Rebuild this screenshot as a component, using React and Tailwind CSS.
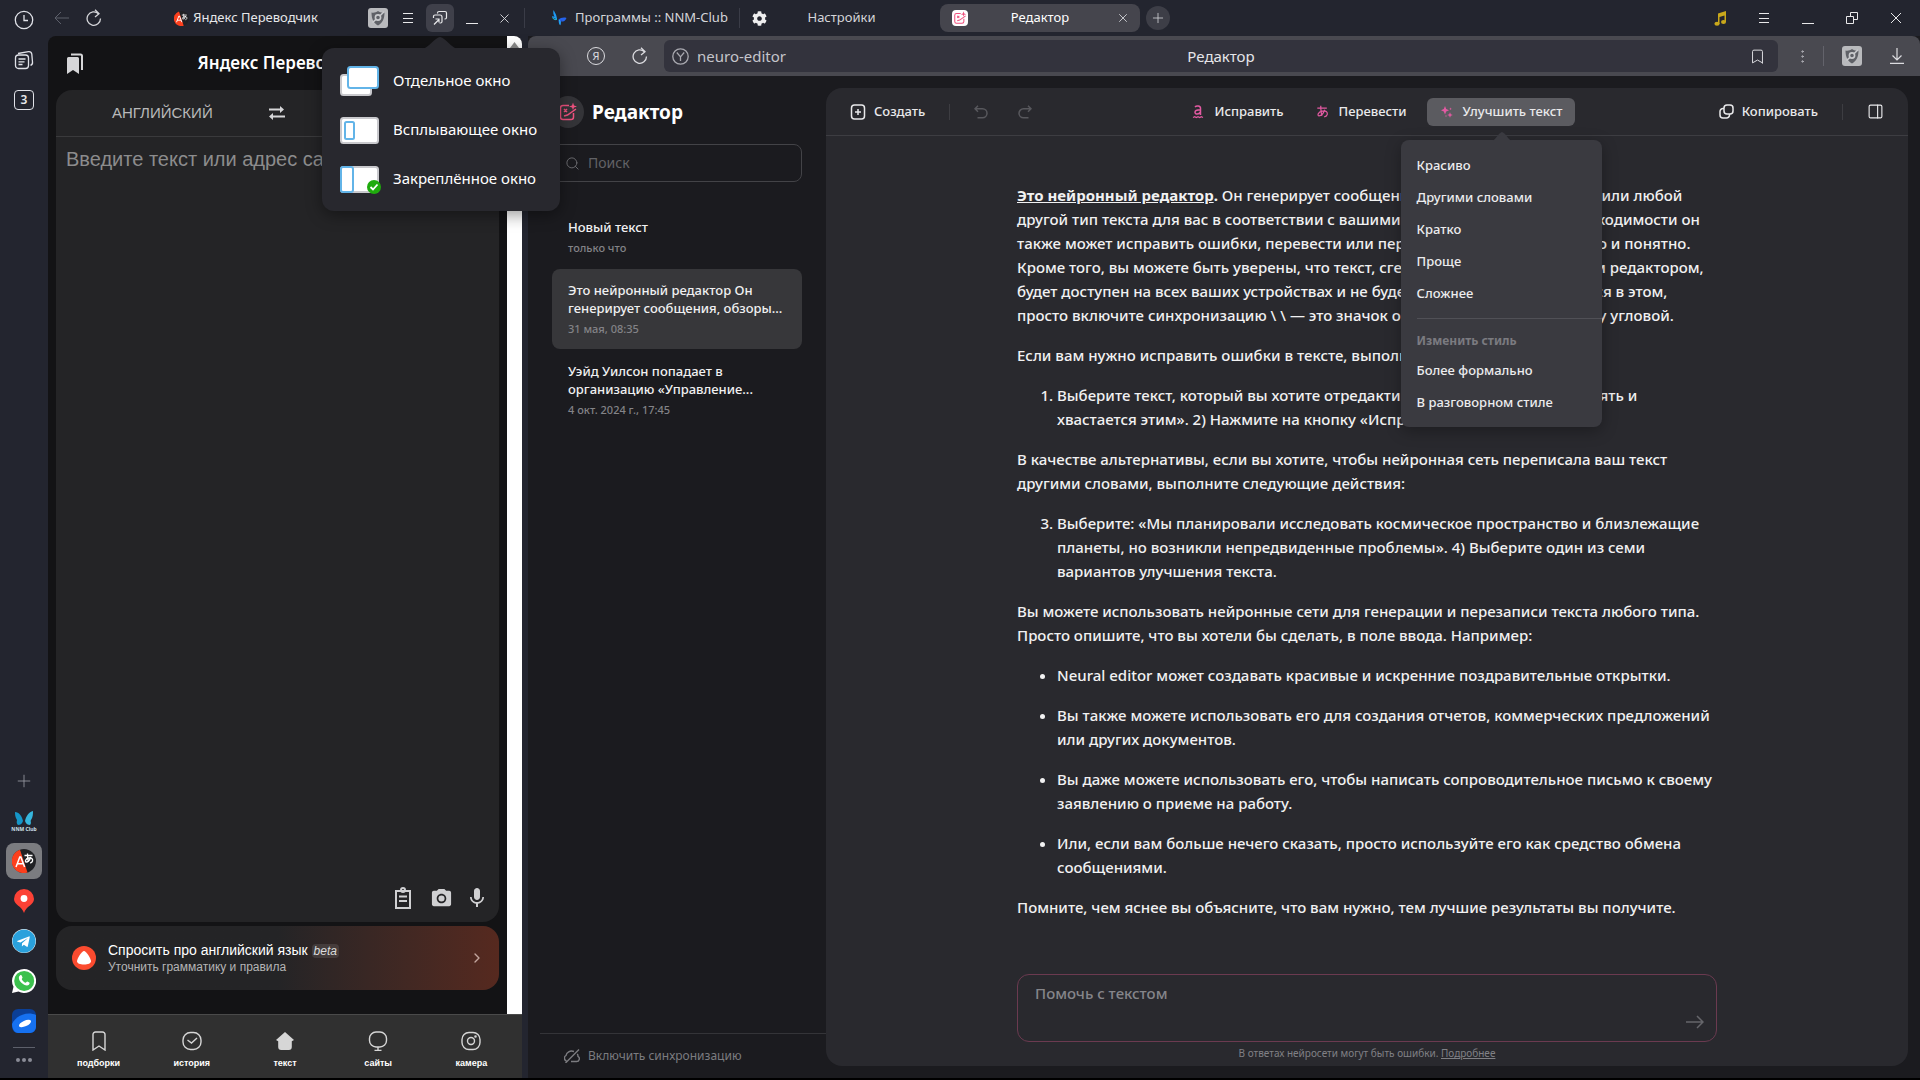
import {
  Bookmark,
  ChevronRight,
  MoreVertical,
  PanelRight,
  Plus,
  Search,
  X,
} from 'lucide-react'
import { FaTelegram, FaCog } from 'react-icons/fa'
import { MdCameraAlt, MdMic } from 'react-icons/md'

const EDITOR_ITEMS = [
  { title: ['Новый текст'], date: 'только что' },
  { title: ['Это нейронный редактор Он', 'генерирует сообщения, обзоры...'], date: '31 мая, 08:35', active: true },
  { title: ['Уэйд Уилсон попадает в', 'организацию «Управление...'], date: '4 окт. 2024 г., 17:45' },
]

const IMPROVE_ITEMS = ['Красиво', 'Другими словами', 'Кратко', 'Проще', 'Сложнее']
const STYLE_ITEMS = ['Более формально', 'В разговорном стиле']

function Lines({ of }) {
  return of.map((line, i) => (
    <span key={i} className="block whitespace-nowrap">{line}</span>
  ))
}

function ShieldIcon() {
  return (
    <svg width="20" height="20" viewBox="0 0 20 20" aria-hidden="true">
      <rect width="20" height="20" rx="3" fill="#b9babd" />
      <path d="M3.500 4.500C6 5 8 4.400 10 3c2 1.400 4 2 6.500 1.500C16.500 11 14.500 15 10 17.500 5.500 15 3.500 11 3.500 4.500Z" fill="#5f6167" />
      <circle cx="10" cy="9.500" r="2.600" fill="none" stroke="#c9cacd" strokeWidth="1.600" />
      <path d="M4.500 14.500 8 11.300M12 7.700l4-4" stroke="#c9cacd" strokeWidth="1.600" />
    </svg>
  )
}

function ReloadIcon() {
  return (
    <svg width="16" height="18" viewBox="0 0 16 18" fill="none" stroke="currentColor" strokeWidth="1.300" aria-hidden="true">
      <path d="M12.500 4.800A6.700 6.700 0 1 0 14.500 9.500" />
      <path d="M9 .8l4 4-4 3.200" />
    </svg>
  )
}

function MenuIcon() {
  return (
    <svg width="12" height="12" viewBox="0 0 12 12" stroke="#e8e8ea" aria-hidden="true">
      <path d="M1 1.500h10M1 6.500h10M1 10.500h10" />
    </svg>
  )
}

function PinIcon() {
  return (
    <svg width="16" height="16" viewBox="0 0 16 16" fill="none" stroke="#e8e8ea" strokeWidth="1.200" aria-hidden="true">
      <path d="M5.500 3.500V3a1.500 1.500 0 0 1 1.500-1.500h6A1.500 1.500 0 0 1 14.500 3v4.500A1.500 1.500 0 0 1 13 9h-.5" />
      <path d="M1.500 8V6.500A1.500 1.500 0 0 1 3 5h5a2 2 0 0 1 2 2v4.500A1.500 1.500 0 0 1 8.500 13H7.500" />
      <path d="M2 14.500 7 9.500M3.500 9H7v3.500" />
    </svg>
  )
}

function TranslateLogo({ size }) {
  return (
    <svg width={size} height={size} viewBox="0 0 24 24" aria-hidden="true">
      <circle cx="12" cy="12" r="12" fill="#202124" />
      <path d="M8 .7A12 12 0 1 0 15.500 23.500Z" fill="#fc3f1d" />
      <path d="m4 18 3.800-10h1l3.800 10M5.300 14.700h6" fill="none" stroke="#fff" strokeWidth="1.500" />
      <path d="M12.500 6.500h8M15.500 4.500c0 4 .3 6.500 1 8.500M18.700 8c-.8 3-3 5-4.500 5s-1-3.500 2.800-4c3-.3 4 1.200 3.500 3-.3 1.200-1.200 1.700-2.300 2" fill="none" stroke="#fff" strokeWidth="1.300" />
    </svg>
  )
}

function EditorLogo({ size }) {
  return (
    <svg width={size} height={size} viewBox="0 0 20 20" fill="none" stroke="#f0527f" strokeWidth="1.500" aria-hidden="true">
      <path d="M11 3.500H5A2.500 2.500 0 0 0 2.500 6v9A2.500 2.500 0 0 0 5 17.500h8a2.500 2.500 0 0 0 2.500-2.500v-4" />
      <path d="m6 14 3.500-1L18 7M6 7l3 3M9 7l-3 3" />
      <path d="M15 .5 16 3.500l3 1-3 1-1 2.500-1-2.500-3-1 3-1Z" fill="#f0527f" stroke="none" />
    </svg>
  )
}

function ButterflyIcon() {
  return (
    <svg width="16" height="16" viewBox="0 0 16 16" aria-hidden="true">
      <path d="M2.500 0c1 2 3 4 3.500 9-2 0-5-1.500-5-3l2.500.7C2.300 4.500 2 2.500 2.500 0Z" fill="#1d9bf5" />
      <path d="M7.500 9.500c2-1.500 5-2.500 8-1.500-1 3-3 3.500-5 3.500l.8-1.500c-1 .8-1.800 2.500-1.800 5.500-2-2-2-4-2-6Z" fill="#2563eb" />
      <path d="M1.500 7.500c1 2 3 2.800 4.500 1.500M8 10c1 .5 1 2.500 1 4.500" stroke="#22d3ee" fill="none" />
    </svg>
  )
}

function WindowIcon({ kind }) {
  return (
    <svg width="41" height="30" viewBox="0 0 41 30" aria-hidden="true">
      {kind === 'separate' && (
        <>
          <rect x="1" y="9" width="30" height="20" rx="2.500" fill="#fff" stroke="#c9c9cd" strokeWidth="2" />
          <rect x="8" y="1" width="30" height="21" rx="2.500" fill="#fff" stroke="#62b4e8" strokeWidth="2" />
        </>
      )}
      {kind === 'popup' && (
        <>
          <rect x="1" y="3" width="37" height="25" rx="2.500" fill="#fff" stroke="#c9c9cd" strokeWidth="2" />
          <rect x="5" y="7" width="9" height="17" rx="1.500" fill="#fff" stroke="#62b4e8" strokeWidth="2" />
        </>
      )}
      {kind === 'pinned' && (
        <>
          <rect x="1" y="3" width="37" height="25" rx="2.500" fill="#fff" stroke="#c9c9cd" strokeWidth="2" />
          <rect x="1" y="3" width="12" height="25" rx="2" fill="#fff" stroke="#62b4e8" strokeWidth="2" />
          <circle cx="34" cy="23" r="7" fill="#1fab0d" />
          <path d="m30.500 23 2.500 2.500 4.500-5" fill="none" stroke="#fff" strokeWidth="1.800" />
        </>
      )}
    </svg>
  )
}

function WindowModeMenu() {
  const modes = [
    ['separate', 'Отдельное окно'],
    ['popup', 'Всплывающее окно'],
    ['pinned', 'Закреплённое окно'],
  ]
  return (
    <div className="absolute top-11 -left-26 z-30 flex w-[238px] flex-col rounded-xl bg-[#28282e] py-2 shadow-[0_4px_16px_rgba(0,0,0,0.4)]">
      <svg className="absolute -top-3 left-24" width="44" height="13" viewBox="0 0 44 13" aria-hidden="true">
        <path d="M4 13c7-1 12-11 18-12 6 1 11 11 18 12Z" fill="#28282e" />
      </svg>
      {modes.map(([kind, label]) => (
        <button key={kind} className="flex h-[49px] items-center gap-3 pl-[18px] text-left text-[15px] text-white">
          <WindowIcon kind={kind} />
          <span className="whitespace-nowrap">{label}</span>
        </button>
      ))}
    </div>
  )
}

function TitleBar() {
  return (
    <header className="flex h-9 shrink-0 items-center text-[13px] text-[#d5d6da]">
      <div className="flex h-full w-[525px] shrink-0 items-center pl-[52px]">
        <button aria-label="Назад" className="flex w-5 justify-center text-[#5d606b]">
          <svg width="16" height="16" viewBox="0 0 16 16" fill="none" stroke="currentColor" aria-hidden="true">
            <path d="M15 8H1.500M7 2 1 8l6 6" />
          </svg>
        </button>
        <button aria-label="Обновить" className="ml-3 flex w-5 justify-center"><ReloadIcon /></button>
        <div className="flex flex-1 items-center justify-center gap-1 pl-5">
          <TranslateLogo size={15} />
          <span className="whitespace-nowrap text-[#e6e7ea]">Яндекс Переводчик</span>
        </div>
        <div className="flex items-center">
          <button aria-label="Защита"><ShieldIcon /></button>
          <button aria-label="Меню" className="ml-3.5"><MenuIcon /></button>
          <div className="relative ml-3">
            <button aria-label="Режим окна" className="flex h-7 w-7 items-center justify-center rounded-md bg-[#3f404a]">
              <PinIcon />
            </button>
            <WindowModeMenu />
          </div>
          <button aria-label="Свернуть" className="ml-3 flex h-3 w-3 items-end"><span className="h-px w-full bg-[#e8e8ea]" /></button>
          <button aria-label="Закрыть" className="mr-3 ml-[19px]"><X size={15} strokeWidth={1.5} /></button>
          <span className="h-5 w-px bg-[#3a3c47]" />
        </div>
      </div>

      <nav className="flex h-full flex-1 items-center">
        <button className="flex h-5 w-[215px] items-center gap-2 border-r border-[#3a3c47] pl-6.5 whitespace-nowrap">
          <ButterflyIcon />
          Программы :: NNM-Club
        </button>
        <button className="flex h-6 w-[200px] items-center pl-3 whitespace-nowrap">
          <FaCog size={15} className="text-[#eeeeef]" />
          <span className="flex-1 pr-6 text-center">Настройки</span>
        </button>
        <div className="flex h-7 w-[200px] items-center rounded-lg bg-[#45454d] pr-2.5 pl-3">
          <span className="rounded bg-white p-px"><EditorLogo size={14} /></span>
          <button className="flex-1 pr-1 text-center text-white">Редактор</button>
          <button aria-label="Закрыть вкладку"><X size={14} strokeWidth={1.5} /></button>
        </div>
        <button aria-label="Новая вкладка" className="ml-1.5 flex h-6 w-6 items-center justify-center rounded-full bg-[#3d3e47]">
          <Plus size={16} strokeWidth={1.2} />
        </button>
      </nav>

      <div className="flex w-[210px] items-center gap-8 pl-1">
        <svg width="12" height="15" viewBox="0 0 12 15" fill="#c9a81b" aria-hidden="true">
          <path d="M4 2.500 12 0v11h-1.500V4.500l-5 1.500v7H4Z" />
          <ellipse cx="3" cy="12.700" rx="2.600" ry="2" />
          <ellipse cx="9.500" cy="11" rx="2.500" ry="2" />
        </svg>
        <button aria-label="Меню браузера"><MenuIcon /></button>
        <button aria-label="Свернуть окно" className="flex h-3 w-3 items-end"><span className="h-px w-full bg-[#e8e8ea]" /></button>
        <button aria-label="Развернуть окно">
          <svg width="12" height="12" viewBox="0 0 12 12" fill="none" stroke="#e8e8ea" aria-hidden="true">
            <path d="M.5 4.500h7v7h-7ZM4.500 4.500v-4h7v7h-4" />
          </svg>
        </button>
        <button aria-label="Закрыть окно">
          <svg width="12" height="12" viewBox="0 0 12 12" stroke="#e8e8ea" aria-hidden="true">
            <path d="m1 1 10 10M11 1 1 11" />
          </svg>
        </button>
      </div>
    </header>
  )
}

function SideRail() {
  return (
    <aside className="flex w-12 shrink-0 flex-col items-center">
      <button aria-label="История" className="-mt-6.5 h-5">
        <svg width="20" height="20" viewBox="0 0 20 20" fill="none" stroke="#e0e2e8" strokeWidth="1.300" aria-hidden="true">
          <circle cx="10" cy="10" r="8.700" />
          <path d="M10 5v5.500h4" />
        </svg>
      </button>
      <button aria-label="Коллекции" className="mt-5 h-5">
        <svg width="20" height="20" viewBox="0 0 20 20" fill="none" stroke="#e0e2e8" strokeWidth="1.300" aria-hidden="true">
          <rect x="1.500" y="5" width="13" height="13.500" rx="3" />
          <path d="M4 3.500 14.500 1.700a3 3 0 0 1 3.300 2.500L18.500 12a3 3 0 0 1-2 3.300M4.500 9h7M4.500 11.800h6M4.500 14.500h4" />
        </svg>
      </button>
      <button className="mt-5 h-5 w-5 rounded border border-[#e0e2e8] text-xs leading-[18px] font-semibold text-[#e6e7ea]">3</button>

      <div className="mt-auto flex flex-col items-center">
        <button aria-label="Добавить" className="text-[#9a9ca5]"><Plus size={20} strokeWidth={1} /></button>
        <button className="mt-5 flex h-6 flex-col items-center" aria-label="NNM-Club">
          <svg width="20" height="15" viewBox="0 0 20 15" aria-hidden="true">
            <path d="M1 1c4 0 7 4 8 9-1 3-3 4-5 4-2-2-1-4-1-5C1 6 1 3 1 1Z" fill="#1596c8" />
            <path d="M19 0c-4 1-7 5-8 10 1 3 3 4 5 4 2-2 0-4 1-5 2-3 2-6 2-9Z" fill="#36b6dd" />
          </svg>
          <span className="text-[5px] leading-[6px] font-bold text-[#cfe0ea]">NNM Club</span>
        </button>
        <button aria-label="Переводчик" className="mt-2 flex h-9 w-9 items-center justify-center rounded-lg bg-[#7b7c80]">
          <TranslateLogo size={24} />
        </button>
        <button aria-label="Карты" className="mt-2.5">
          <svg width="20" height="24" viewBox="0 0 20 24" aria-hidden="true">
            <path d="M10 0a10 10 0 0 1 10 10c0 6-8 7-10 14C8 17 0 16 0 10A10 10 0 0 1 10 0Z" fill="#fc4236" />
            <circle cx="10" cy="9.500" r="3.400" fill="#fff" />
          </svg>
        </button>
        <button aria-label="Telegram" className="mt-4 rounded-full bg-white text-[#2aa1dc]"><FaTelegram size={24} /></button>
        <button aria-label="WhatsApp" className="mt-4">
          <svg width="24" height="24" viewBox="0 0 24 24" aria-hidden="true">
            <path d="M12 0a12 12 0 1 1-5.500 22.600L0 24l1.500-6.200A12 12 0 0 1 12 0Z" fill="#fff" />
            <circle cx="12.200" cy="11.900" r="10" fill="#3cc14e" />
            <path d="M8 6.500c.7-.7 1.500-.5 1.700.1l.8 2c.2.500-.8 1.200-.7 1.600.5 1.300 2 2.900 3.800 3.500.5.200 1.200-1.300 1.700-1.100l2 1c.6.400.3 1.500-.4 2.200-3 2.500-10.700-3-10-7.600.1-.7.500-1.200 1.100-1.700Z" fill="#fff" />
          </svg>
        </button>
        <button aria-label="Диск" className="mt-4">
          <svg width="24" height="24" viewBox="0 0 24 24" aria-hidden="true">
            <rect width="24" height="24" rx="6" fill="#0b3f96" />
            <path d="M0 15C4 6 16 2 24 6v12a6 6 0 0 1-6 6H6c-4 0-6-5-6-9Z" fill="#1671f0" />
            <ellipse cx="13" cy="14.500" rx="6.500" ry="2.800" transform="rotate(-24 13 14.500)" fill="#fff" />
          </svg>
        </button>
        <span className="mt-3.5 h-px w-[22px] bg-[#5d606b]" />
        <button aria-label="Ещё" className="mt-2.5 mb-4 flex gap-0.5">
          <span className="h-1 w-1 rounded-full bg-[#8a8c96]" />
          <span className="h-1 w-1 rounded-full bg-[#8a8c96]" />
          <span className="h-1 w-1 rounded-full bg-[#8a8c96]" />
        </button>
      </div>
    </aside>
  )
}

const NAV_ICONS = {
  подборки: <path d="M4 3.500A2.500 2.500 0 0 1 6.500 1h7A2.500 2.500 0 0 1 16 3.500V19l-6-4-6 4Z" />,
  история: (
    <>
      <rect x="1" y="1.500" width="18" height="17" rx="7.500" />
      <path d="m5.500 9 4 3 5.500-5" />
    </>
  ),
  текст: <path d="m10 1 9 8-2.200 1.200V16a3 3 0 0 1-3 3H6.200a3 3 0 0 1-3-3v-5.800L1 9Z" fill="#d6d6d6" stroke="none" />,
  сайты: (
    <>
      <rect x="1.500" y="1" width="17" height="15" rx="6.500" />
      <path d="M10 16v3.500M6.500 19.500h7" />
    </>
  ),
  камера: (
    <>
      <rect x="1" y="1.500" width="18" height="17" rx="7" />
      <circle cx="10" cy="10" r="3.500" />
      <circle cx="14.500" cy="5.500" r=".6" />
    </>
  ),
}

function TranslatorPanel() {
  return (
    <section className="flex w-[474px] shrink-0 flex-col overflow-hidden rounded-t-lg bg-[#131315] font-['Liberation_Sans',sans-serif]">
      <div className="flex flex-1">
        <div className="flex flex-1 flex-col px-2">
          <div className="flex h-[54px] items-center font-['Noto_Sans',sans-serif]">
            <button aria-label="Подборки" className="ml-2.5 w-6">
              <svg width="18" height="21" viewBox="0 0 18 21" aria-hidden="true">
                <path d="M1 5.500A1.500 1.500 0 0 1 2.500 4h9A1.500 1.500 0 0 1 13 5.500V21l-6-4-6 4Z" fill="#d6d6d8" />
                <path d="M5 1.500h9.500A1.500 1.500 0 0 1 16 3v14" fill="none" stroke="#d6d6d8" strokeWidth="2" />
              </svg>
            </button>
            <h1 className="flex-1 pr-6 text-center text-[17px] font-semibold whitespace-nowrap text-white">Яндекс Переводчик</h1>
          </div>
          <div className="flex flex-1 flex-col rounded-2xl bg-[#242426]">
            <div className="flex h-[47px] items-center border-b border-[#3a3a3c] text-[15px] text-[#b9b9ba]">
              <button className="w-[148px] pl-14 text-left whitespace-nowrap">АНГЛИЙСКИЙ</button>
              <button aria-label="Поменять языки" className="flex flex-1 justify-center">
                <svg width="17" height="16" viewBox="0 0 17 16" fill="none" stroke="#d6d6d8" strokeWidth="2" aria-hidden="true">
                  <path d="M1 4.500h12M17 11.500H4" />
                  <path d="M12 1v7l4-3.500ZM5 8v7l-4-3.500Z" fill="#d6d6d8" stroke="none" />
                </svg>
              </button>
              <button className="w-[150px] text-left">РУССКИЙ</button>
            </div>
            <textarea
              aria-label="Текст для перевода"
              placeholder="Введите текст или адрес сайта"
              className="flex-1 resize-none bg-transparent px-2.5 py-2.5 text-xl leading-6 text-white outline-none placeholder:text-[#8c8c8d]"
            />
            <div className="flex items-center justify-end pr-2.5 pb-3 text-[#d0d0d2]">
              <button aria-label="Вставить" className="mr-[18px]">
                <svg width="18" height="22" viewBox="0 0 18 22" fill="none" stroke="currentColor" strokeWidth="2" aria-hidden="true">
                  <path d="M2 4h14v17H2ZM5 9.500h8M5 14h8" />
                  <circle cx="9" cy="3" r="2" />
                </svg>
              </button>
              <button aria-label="Камера" className="mr-3"><MdCameraAlt size={23} /></button>
              <button aria-label="Голосовой ввод"><MdMic size={24} /></button>
            </div>
          </div>
          <button className="mt-1 mb-6 flex h-16 items-center rounded-2xl bg-linear-to-r from-[#242426] from-50% to-[#56291f] px-4 text-left">
            <svg width="24" height="24" viewBox="0 0 24 24" aria-hidden="true">
              <circle cx="12" cy="12" r="12" fill="#fb4b2f" />
              <path d="M12 5c2 0 7 7.500 7 10.200 0 2-3 3.300-7 3.300s-7-1.300-7-3.300C5 12.500 10 5 12 5Z" fill="#fff" />
            </svg>
            <span className="ml-3 flex flex-1 flex-col">
              <span className="text-sm leading-[18px] text-white">
                Спросить про английский язык <i className="rounded bg-white/10 px-0.5 text-xs text-[#dcdcdc]">beta</i>
              </span>
              <span className="text-xs leading-4 text-[#b5b5b6]">Уточнить грамматику и правила</span>
            </span>
            <ChevronRight size={16} className="-mr-0.5 text-[#c3a79f]" />
          </button>
        </div>
        <div className="flex w-[15px] justify-center bg-white pt-[6px]">
          <svg width="9" height="6" viewBox="0 0 9 6" aria-hidden="true"><path d="M4.500 0 9 6H0Z" fill="#8a8a8a" /></svg>
        </div>
      </div>
      <nav className="grid h-16 grid-cols-5 border-t border-[#4a4a4a] bg-[#303030] px-1">
        {Object.entries(NAV_ICONS).map(([label, icon]) => (
          <button key={label} className="flex flex-col items-center pt-4 text-[9px] leading-3 font-bold text-white">
            <svg width="20" height="20" viewBox="0 0 20 20" fill="none" stroke="#d6d6d6" strokeWidth="1.400" aria-hidden="true">
              {icon}
            </svg>
            <span className="mt-1.5">{label}</span>
          </button>
        ))}
      </nav>
    </section>
  )
}

function AddressBar() {
  return (
    <div className="flex h-10 items-center rounded-t-lg bg-[#494950] pl-[59px] text-[#dcdce0]">
      <button aria-label="Яндекс" className="h-[18px] w-[18px] rounded-full border border-[#dcdce0] text-[11px] leading-4">Я</button>
      <button aria-label="Обновить страницу" className="ml-[27px]"><ReloadIcon /></button>
      <div className="relative ml-4 flex h-8 flex-1 items-center rounded-md bg-[#33333d] pr-3 pl-2">
        <svg width="17" height="17" viewBox="0 0 17 17" fill="none" stroke="#a9a9b0" strokeWidth="1.300" aria-hidden="true">
          <circle cx="8.500" cy="8.500" r="7.700" />
          <path d="m4.800 4.500 3.700 4.300 3.700-4.300M8.500 8.800V13" />
        </svg>
        <input aria-label="Адрес" defaultValue="neuro-editor" className="ml-2 w-0 flex-1 bg-transparent text-[15px] text-[#c5c5cb] outline-none" />
        <span className="absolute left-1/2 -translate-x-1/2 text-[15px] text-[#e6e6ea]">Редактор</span>
        <button aria-label="В закладки"><Bookmark size={17} strokeWidth={1.4} /></button>
      </div>
      <button aria-label="Ещё" className="mr-3 ml-4 text-[#b5b5bb]"><MoreVertical size={17} strokeWidth={1.4} /></button>
      <div className="flex h-5 items-center gap-7 border-l border-[#63636b] pr-4 pl-[18px]">
        <button aria-label="Защита"><ShieldIcon /></button>
        <button aria-label="Загрузки">
          <svg width="14" height="16" viewBox="0 0 14 16" fill="none" stroke="currentColor" strokeWidth="1.200" aria-hidden="true">
            <path d="M7 0v12M2.500 7.500 7 12l4.500-4.500M0 15.400h14" />
          </svg>
        </button>
      </div>
    </div>
  )
}

function EditorSidebar() {
  return (
    <aside className="flex w-[298px] shrink-0 flex-col">
      <div className="flex items-center gap-2 pt-5 pl-6">
        <span className="flex h-8 w-8 items-center justify-center rounded-full bg-[#343438]"><EditorLogo size={20} /></span>
        <h2 className="text-[19px] leading-8 font-bold text-white">Редактор</h2>
      </div>
      <label className="mt-4 mr-6 ml-6 flex h-[38px] items-center gap-2 rounded-lg border border-[#434347] pl-3">
        <Search size={15} strokeWidth={1.5} className="text-[#6f6f73]" />
        <input aria-label="Поиск" placeholder="Поиск" className="w-0 flex-1 bg-transparent text-sm text-white outline-none placeholder:text-[#626266]" />
      </label>
      <ul className="mt-6 flex flex-col gap-px px-6">
        {EDITOR_ITEMS.map((item) => (
          <li key={item.date}>
            <button className={item.active ? 'w-full rounded-lg bg-[#37373a] p-3 pl-4 text-left' : 'w-full rounded-lg p-3 pl-4 text-left'}>
              <span className="block text-[13px] leading-[18px] font-medium text-[#f0f0f1]"><Lines of={item.title} /></span>
              <span className="mt-1 block text-[11px] leading-4 font-medium text-[#838387]">{item.date}</span>
            </button>
          </li>
        ))}
      </ul>
      <button className="mt-auto ml-3 flex h-[45px] items-center gap-2 border-t border-[#343438] pl-6 text-xs text-[#7c7c80]">
        <svg width="16" height="14" viewBox="0 0 16 14" fill="none" stroke="currentColor" strokeWidth="1.400" aria-hidden="true">
          <path d="M2.500 12A3 3 0 0 1 2 6.500C2.500 3.500 6 1 10 2.500M7 12.500h5.500A2.800 2.800 0 0 0 14 7.300c0-1-.2-1.800-.7-2.500M1.500 14 15 .5" />
        </svg>
        Включить синхронизацию
      </button>
    </aside>
  )
}

function ImproveMenu() {
  return (
    <div className="absolute top-[42px] -left-6.5 z-20 w-[201px] rounded-lg bg-[#3a3a40] pt-2.5 pb-2 text-[13px] font-medium text-[#ececee] shadow-[0_4px_16px_rgba(0,0,0,0.3)]">
      <svg className="absolute -top-2 left-[91px]" width="20" height="9" viewBox="0 0 20 9" aria-hidden="true">
        <path d="M0 9c4-1 6-8 10-9 4 1 6 8 10 9Z" fill="#3a3a40" />
      </svg>
      {IMPROVE_ITEMS.map((label) => (
        <button key={label} className="block h-8 w-full px-4 text-left">{label}</button>
      ))}
      <div className="mt-2 ml-4 border-t border-[#505056]" />
      <p className="mt-2.5 px-4 pb-0.5 text-xs leading-6 font-bold text-[#7b7b80]">Изменить стиль</p>
      {STYLE_ITEMS.map((label) => (
        <button key={label} className="block h-8 w-full px-4 text-left">{label}</button>
      ))}
    </div>
  )
}

function EditorToolbar() {
  return (
    <div className="flex h-12 shrink-0 items-center justify-between border-b border-[#3d3d42] px-6 text-[13px] font-medium text-[#e9e9eb]">
      <div className="flex items-center">
        <button className="flex items-center gap-2">
          <svg width="16" height="16" viewBox="0 0 16 16" fill="none" stroke="currentColor" strokeWidth="1.500" aria-hidden="true">
            <rect x="1.500" y="1" width="13" height="14" rx="3" />
            <path d="M8 5v6M5 8h6" />
          </svg>
          Создать
        </button>
        <span className="mx-6 h-4 w-px bg-[#3d3d42]" />
        <button aria-label="Отменить" className="text-[#58585d]">
          <svg width="14" height="14" viewBox="0 0 14 14" fill="none" stroke="currentColor" strokeWidth="1.500" aria-hidden="true">
            <path d="M4 .8 1 3.800l3 3M1 3.800h7.500a4.500 4.500 0 0 1 0 9H3.500" />
          </svg>
        </button>
        <button aria-label="Повторить" className="ml-7.5 text-[#58585d]">
          <svg width="14" height="14" viewBox="0 0 14 14" fill="none" stroke="currentColor" strokeWidth="1.500" aria-hidden="true">
            <path d="m10 .8 3 3-3 3M13 3.800H5.500a4.500 4.500 0 0 0 0 9h5" />
          </svg>
        </button>
      </div>
      <div className="ml-4 flex items-center">
        <button className="flex items-center gap-2.5">
          <svg width="12" height="14" viewBox="0 0 12 14" fill="none" stroke="#e35aa2" strokeWidth="1.500" aria-hidden="true">
            <path d="M3 2c1.300-1.500 5.500-1.500 5.500 1.200V10M8.500 4.700C5.500 4.700 3 5 3 7.200c0 2.400 4 2.600 5.500-.3" />
            <path d="m1 12.500 1.700-.8 1.700.8 1.600-.8 1.700.8 1.600-.8 1.700.8" strokeWidth="1.200" />
          </svg>
          Исправить
        </button>
        <button className="ml-8 flex items-center gap-2.5">
          <svg width="13" height="13" viewBox="0 0 14 15" fill="none" stroke="#e35aa2" strokeWidth="1.400" aria-hidden="true">
            <path d="M1 3.500h11M5 1c0 5 .3 8.500 1.500 11.500M9.500 5.500C8 10 5 12.500 3 12.500s-1.800-4.500 4-5.500c4.500-.6 6 1.500 5.500 3.800-.3 1.500-1.500 2.500-3.500 3" />
          </svg>
          Перевести
        </button>
        <div className="relative ml-5">
          <button className="flex h-7 items-center gap-2.5 rounded-md bg-[#5b5b60] pr-3 pl-3.5">
            <svg width="12" height="12" viewBox="0 0 12 12" fill="#e35aa2" aria-hidden="true">
              <path d="m4 0 1.200 3L8 4.200 5.200 5.400 4 8.500 2.800 5.400 0 4.200 2.800 3Z" />
              <path d="m9 6.200.8 2 2 .8-2 .8-.8 2-.8-2-2-.8 2-.8ZM9.500 1.500l.4 1 1 .4-1 .4-.4 1-.4-1-1-.4 1-.4ZM5 8.800l.3.9.9.3-.9.3-.3.9-.3-.9-.9-.3.9-.3Z" />
            </svg>
            Улучшить текст
          </button>
          <ImproveMenu />
        </div>
      </div>
      <div className="flex items-center">
        <button className="flex items-center gap-2">
          <svg width="15" height="15" viewBox="0 0 15 15" fill="none" stroke="currentColor" strokeWidth="1.500" aria-hidden="true">
            <rect x="5" y="1" width="9" height="9" rx="3" />
            <path d="M5 4.500H4a3 3 0 0 0-3 3V11a3 3 0 0 0 3 3h3.500a3 3 0 0 0 3-3v-1" />
          </svg>
          Копировать
        </button>
        <span className="mx-6 h-4 w-px bg-[#3d3d42]" />
        <button aria-label="Панель"><PanelRight size={17} strokeWidth={1.6} /></button>
      </div>
    </div>
  )
}

function Article() {
  return (
    <article className="flex flex-col gap-4 text-[15px] leading-6 font-medium text-[#f1f1f2]">
      <div>
        <p className="whitespace-nowrap">
          <b className="underline">Это нейронный редактор</b><b>.</b> Он генерирует сообщения, посты, обзоры, письма или любой
        </p>
        <Lines
          of={[
            'другой тип текста для вас в соответствии с вашими потребностями. При необходимости он',
            'также может исправить ошибки, перевести или переписать весь текст красиво и понятно.',
            'Кроме того, вы можете быть уверены, что текст, сгенерированный нейронным редактором,',
            'будет доступен на всех ваших устройствах и не будет потерян. Чтобы убедиться в этом,',
            'просто включите синхронизацию \\ \\ — это значок облака в левом нижнем углу угловой.',
          ]}
        />
      </div>
      <p>Если вам нужно исправить ошибки в тексте, выполните шаги:</p>
      <ol className="list-decimal pl-10">
        <li>
          <Lines
            of={[
              'Выберите текст, который вы хотите отредактировать: «Он обожает стрелять и',
              'хвастается этим». 2) Нажмите на кнопку «Исправить».',
            ]}
          />
        </li>
      </ol>
      <p>
        <Lines
          of={[
            'В качестве альтернативы, если вы хотите, чтобы нейронная сеть переписала ваш текст',
            'другими словами, выполните следующие действия:',
          ]}
        />
      </p>
      <ol start={3} className="list-decimal pl-10">
        <li>
          <Lines
            of={[
              'Выберите: «Мы планировали исследовать космическое пространство и близлежащие',
              'планеты, но возникли непредвиденные проблемы». 4) Выберите один из семи',
              'вариантов улучшения текста.',
            ]}
          />
        </li>
      </ol>
      <p>
        <Lines
          of={[
            'Вы можете использовать нейронные сети для генерации и перезаписи текста любого типа.',
            'Просто опишите, что вы хотели бы сделать, в поле ввода. Например:',
          ]}
        />
      </p>
      <ul className="flex list-disc flex-col gap-4 pl-10">
        <li>Neural editor может создавать красивые и искренние поздравительные открытки.</li>
        <li><Lines of={['Вы также можете использовать его для создания отчетов, коммерческих предложений', 'или других документов.']} /></li>
        <li><Lines of={['Вы даже можете использовать его, чтобы написать сопроводительное письмо к своему', 'заявлению о приеме на работу.']} /></li>
        <li><Lines of={['Или, если вам больше нечего сказать, просто используйте его как средство обмена', 'сообщениями.']} /></li>
      </ul>
      <p>Помните, чем яснее вы объясните, что вам нужно, тем лучшие результаты вы получите.</p>
    </article>
  )
}

export default function App() {
  return (
    <div className="flex min-h-screen flex-col border-b-2 border-black bg-[#23252f] font-['Noto_Sans',sans-serif]">
      <TitleBar />
      <div className="flex flex-1">
        <SideRail />
        <TranslatorPanel />
        <div className="ml-1.5 flex min-w-0 flex-1 flex-col bg-[#1b1b1f]">
          <AddressBar />
          <div className="flex flex-1">
            <EditorSidebar />
            <main className="mt-3 mr-3 mb-3 flex min-w-0 flex-1 flex-col rounded-2xl bg-[#29292e]">
              <EditorToolbar />
              <div className="mx-auto flex w-[700px] flex-1 flex-col pt-[47px]">
                <Article />
                <div className="mt-auto flex h-[68px] rounded-xl border border-[#6b3a50] py-1.5 pr-3 pl-[17px]">
                  <textarea
                    aria-label="Запрос"
                    placeholder="Помочь с текстом"
                    className="flex-1 resize-none bg-transparent text-[15px] leading-6 font-medium text-white outline-none placeholder:text-[#85858a]"
                  />
                  <button aria-label="Отправить" className="self-end pb-1.5 text-[#66666b]">
                    <svg width="18" height="14" viewBox="0 0 18 14" fill="none" stroke="currentColor" strokeWidth="1.500" aria-hidden="true">
                      <path d="M0 7h17M11 1l6 6-6 6" />
                    </svg>
                  </button>
                </div>
                <p className="pt-[3px] pb-[5px] text-center text-[10px] leading-4 text-[#808085]">
                  В ответах нейросети могут быть ошибки. <a href="#more" className="underline">Подробнее</a>
                </p>
              </div>
            </main>
          </div>
        </div>
      </div>
    </div>
  )
}
